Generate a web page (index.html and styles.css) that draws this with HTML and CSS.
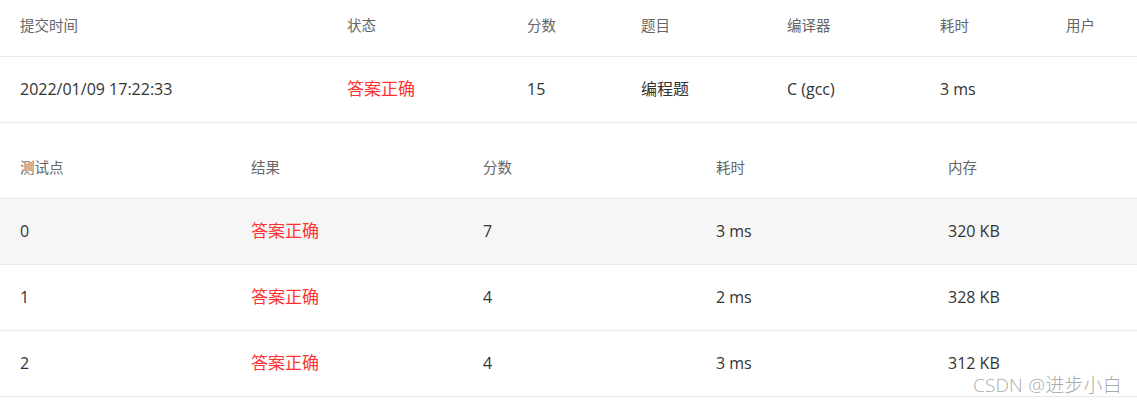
FILE: index.html
```html
<!DOCTYPE html>
<html lang="zh-CN">
<head>
    <meta charset="UTF-8">
    <title>提交详情</title>
    <link rel="stylesheet" href="styles.css">
</head>
<body>
    <div class="page">
        <div class="table submit-table">
            <div class="row head">
                <div class="cell">提交时间</div>
                <div class="cell">状态</div>
                <div class="cell">分数</div>
                <div class="cell">题目</div>
                <div class="cell">编译器</div>
                <div class="cell">耗时</div>
                <div class="cell">用户</div>
            </div>
            <div class="row">
                <div class="cell">2022/01/09 17:22:33</div>
                <div class="cell ok">答案正确</div>
                <div class="cell">15</div>
                <div class="cell">编程题</div>
                <div class="cell">C (gcc)</div>
                <div class="cell">3 ms</div>
                <div class="cell"></div>
            </div>
        </div>

        <div class="table case-table">
            <div class="row head">
                <div class="cell">测试点</div>
                <div class="cell">结果</div>
                <div class="cell">分数</div>
                <div class="cell">耗时</div>
                <div class="cell">内存</div>
            </div>
            <div class="row striped">
                <div class="cell">0</div>
                <div class="cell ok">答案正确</div>
                <div class="cell">7</div>
                <div class="cell">3 ms</div>
                <div class="cell">320 KB</div>
            </div>
            <div class="row">
                <div class="cell">1</div>
                <div class="cell ok">答案正确</div>
                <div class="cell">4</div>
                <div class="cell">2 ms</div>
                <div class="cell">328 KB</div>
            </div>
            <div class="row">
                <div class="cell">2</div>
                <div class="cell ok">答案正确</div>
                <div class="cell">4</div>
                <div class="cell">3 ms</div>
                <div class="cell">312 KB</div>
            </div>
        </div>

        <div class="watermark">CSDN @进步小白</div>
    </div>
</body>
</html>
```

FILE: styles.css
```css
body {
    margin: 0;
    padding: 0;
    background: #fff;
    color: #333;
    font-family: "Open Sans", "Noto Sans CJK SC", sans-serif;
    overflow: hidden;
}

.page {
    position: relative;
    width: 1137px;
    height: 406px;
}

.row {
    display: grid;
    align-items: center;
    box-sizing: border-box;
    height: 66px;
    padding-bottom: 1px;
    border-bottom: 1px solid #ebebeb;
    font-size: 16px;
    line-height: 20px;
}

.row.head {
    height: 57px;
    padding-bottom: 5px;
    font-size: 14.5px;
    color: #666;
}

.row.striped {
    background: #f6f6f6;
}

.cell {
    padding-left: 20px;
    white-space: nowrap;
}

.ok {
    color: #ff3333;
    font-size: 17px;
}

.submit-table .row {
    grid-template-columns: 327px 180px 114px 146px 153px 126px 1fr;
}

.case-table {
    margin-top: 19px;
}

.case-table .row {
    grid-template-columns: 231px 232px 233px 232px 1fr;
}

.watermark {
    position: absolute;
    right: 15px;
    bottom: 8px;
    font-size: 19px;
    font-weight: 300;
    color: rgba(130, 130, 130, 0.7);
    letter-spacing: 0.2px;
}
```
